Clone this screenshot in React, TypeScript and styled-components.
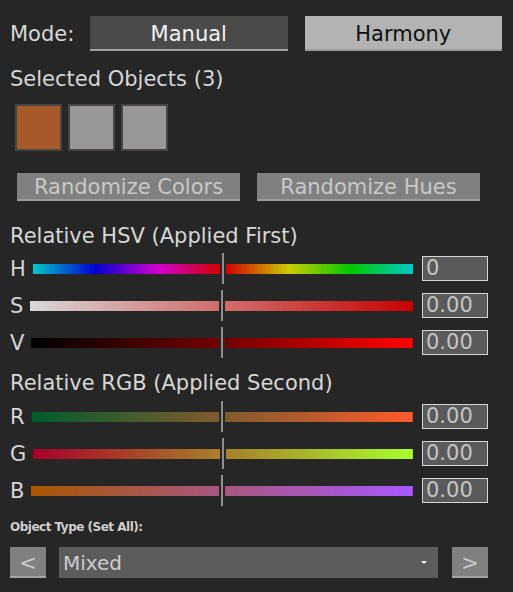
import React from "react";
import styled, { createGlobalStyle } from "styled-components";

const GlobalStyle = createGlobalStyle`
  html, body {
    margin: 0;
    padding: 0;
    background: #262626;
  }
  body {
    font-family: "DejaVu Sans", "Noto Sans", sans-serif;
    color: #d6d6d6;
  }
`;

const Panel = styled.div`
  width: 513px;
  height: 592px;
  box-sizing: border-box;
  padding: 16px 11px 0 10px;
  display: flex;
  flex-direction: column;
  background: #262626;
  overflow: hidden;
`;

const ModeRow = styled.div`
  display: flex;
  align-items: center;
  height: 35px;
`;

const ModeLabel = styled.div`
  width: 80px;
  font-size: 21px;
  color: #d8d8d8;
`;

const ModeButtons = styled.div`
  flex: 1;
  display: flex;
  gap: 17px;
  height: 100%;
`;

const ModeButton = styled.div<{ $active?: boolean }>`
  flex: 1;
  display: flex;
  align-items: center;
  justify-content: center;
  box-sizing: border-box;
  padding-top: 2px;
  font-size: 21px;
  background: ${(p) => (p.$active ? "#4a4a4a" : "#b3b3b3")};
  color: ${(p) => (p.$active ? "#f2f2f2" : "#101010")};
  border-bottom: 2px solid ${(p) => (p.$active ? "#a2a2a2" : "#9a9a9a")};
`;

const Title = styled.div<{ $mt: number }>`
  margin-top: ${(p) => p.$mt}px;
  font-size: 21px;
  line-height: 24px;
  height: 24px;
  color: #d6d6d6;
  white-space: nowrap;
`;

const Swatches = styled.div`
  display: flex;
  gap: 6px;
  margin-top: 13px;
  margin-left: 5px;
`;

const Swatch = styled.div<{ $color: string }>`
  width: 47px;
  height: 47px;
  box-sizing: border-box;
  border: 2px solid #464646;
  background: ${(p) => p.$color};
`;

const ActionRow = styled.div`
  display: flex;
  gap: 17px;
  margin-top: 22px;
  padding-left: 7px;
`;

const ActionButton = styled.div`
  width: 223px;
  height: 28px;
  box-sizing: border-box;
  padding-top: 2px;
  display: flex;
  align-items: center;
  justify-content: center;
  background: #808080;
  color: #c8c8c8;
  font-size: 21px;
  border-bottom: 2px solid #9c9c9c;
  white-space: nowrap;
`;

const SliderGroup = styled.div<{ $mt: number }>`
  display: flex;
  flex-direction: column;
  gap: 6px;
  margin-top: ${(p) => p.$mt}px;
  margin-right: 14px;
`;

const SliderRow = styled.div`
  display: flex;
  align-items: center;
  height: 31px;
`;

const RowLabel = styled.div`
  font-size: 21px;
  line-height: 24px;
  color: #d6d6d6;
  margin-right: 7px;
`;

const Track = styled.div`
  flex: 1;
  display: flex;
  align-items: center;
  height: 31px;
`;

const TrackHalf = styled.div<{ $gradient: string; $side: "left" | "right" }>`
  flex: 1;
  height: 10px;
  background-image: ${(p) => p.$gradient};
  background-size: 200% 100%;
  background-position: ${(p) => (p.$side === "left" ? "0 0" : "100% 0")};
`;

const Grabber = styled.div`
  width: 2px;
  height: 31px;
  margin: 0 2px;
  background: #8e8e8e;
`;

const ValueField = styled.div`
  width: 66px;
  height: 25px;
  margin-left: 9px;
  box-sizing: border-box;
  border: 1px solid #d6d6d6;
  background: #5a5a5a;
  color: #c4c4c4;
  font-size: 21px;
  line-height: 23px;
  padding-left: 3px;
  overflow: hidden;
`;

const SmallLabel = styled.div`
  margin-top: 14px;
  font-size: 12px;
  line-height: 15px;
  font-weight: bold;
  letter-spacing: -0.5px;
  color: #cfcfcf;
`;

const BottomRow = styled.div`
  display: flex;
  height: 31px;
  margin-top: 12px;
  margin-right: 14px;
`;

const NavButton = styled.div`
  width: 36px;
  box-sizing: border-box;
  padding-top: 2px;
  display: flex;
  align-items: center;
  justify-content: center;
  background: #808080;
  color: #c8c8c8;
  font-size: 21px;
  border-bottom: 2px solid #a4a4a4;
`;

const Dropdown = styled.div`
  flex: 1;
  margin: 0 14px 0 13px;
  display: flex;
  align-items: center;
  justify-content: space-between;
  padding: 0 11px 0 4px;
  background: #5c5c5c;
  color: #cdcdcd;
  font-size: 20px;
`;

const Caret = styled.div`
  width: 0;
  height: 0;
  border-left: 3px solid transparent;
  border-right: 3px solid transparent;
  border-top: 3px solid #f0f0f0;
`;

type SliderDef = { label: string; gradient: string; value: string };

const hsv: SliderDef[] = [
  {
    label: "H",
    value: "0",
    gradient:
      "linear-gradient(to right, #00c8c8 0%, #0000d0 16.7%, #d000d0 33.3%, #d00000 50%, #cccc00 66.7%, #00c800 83.3%, #00c8c8 100%)",
  },
  {
    label: "S",
    value: "0.00",
    gradient: "linear-gradient(to right, #d8d8d8 0%, #d06c6c 50%, #c80000 100%)",
  },
  {
    label: "V",
    value: "0.00",
    gradient: "linear-gradient(to right, #000000 0%, #740000 50%, #ff0000 100%)",
  },
];

const rgb: SliderDef[] = [
  {
    label: "R",
    value: "0.00",
    gradient: "linear-gradient(to right, rgb(0,92,46) 0%, rgb(255,90,45) 100%)",
  },
  {
    label: "G",
    value: "0.00",
    gradient: "linear-gradient(to right, rgb(168,0,42) 0%, rgb(168,255,42) 100%)",
  },
  {
    label: "B",
    value: "0.00",
    gradient: "linear-gradient(to right, rgb(168,88,0) 0%, rgb(168,88,255) 100%)",
  },
];

const Slider: React.FC<SliderDef> = ({ label, gradient, value }) => (
  <SliderRow>
    <RowLabel>{label}</RowLabel>
    <Track>
      <TrackHalf $gradient={gradient} $side="left" />
      <Grabber />
      <TrackHalf $gradient={gradient} $side="right" />
    </Track>
    <ValueField>{value}</ValueField>
  </SliderRow>
);

export default function App() {
  return (
    <>
      <GlobalStyle />
      <Panel>
        <ModeRow>
          <ModeLabel>Mode:</ModeLabel>
          <ModeButtons>
            <ModeButton $active>Manual</ModeButton>
            <ModeButton>Harmony</ModeButton>
          </ModeButtons>
        </ModeRow>

        <Title $mt={16}>Selected Objects (3)</Title>
        <Swatches>
          <Swatch $color="#a8592a" />
          <Swatch $color="#999896" />
          <Swatch $color="#999896" />
        </Swatches>

        <ActionRow>
          <ActionButton>Randomize Colors</ActionButton>
          <ActionButton>Randomize Hues</ActionButton>
        </ActionRow>

        <Title $mt={23}>Relative HSV (Applied First)</Title>
        <SliderGroup $mt={5}>
          {hsv.map((s) => (
            <Slider key={s.label} {...s} />
          ))}
        </SliderGroup>

        <Title $mt={13}>Relative RGB (Applied Second)</Title>
        <SliderGroup $mt={6}>
          {rgb.map((s) => (
            <Slider key={s.label} {...s} />
          ))}
        </SliderGroup>

        <SmallLabel>Object Type (Set All):</SmallLabel>
        <BottomRow>
          <NavButton>&lt;</NavButton>
          <Dropdown>
            <span>Mixed</span>
            <Caret />
          </Dropdown>
          <NavButton>&gt;</NavButton>
        </BottomRow>
      </Panel>
    </>
  );
}
